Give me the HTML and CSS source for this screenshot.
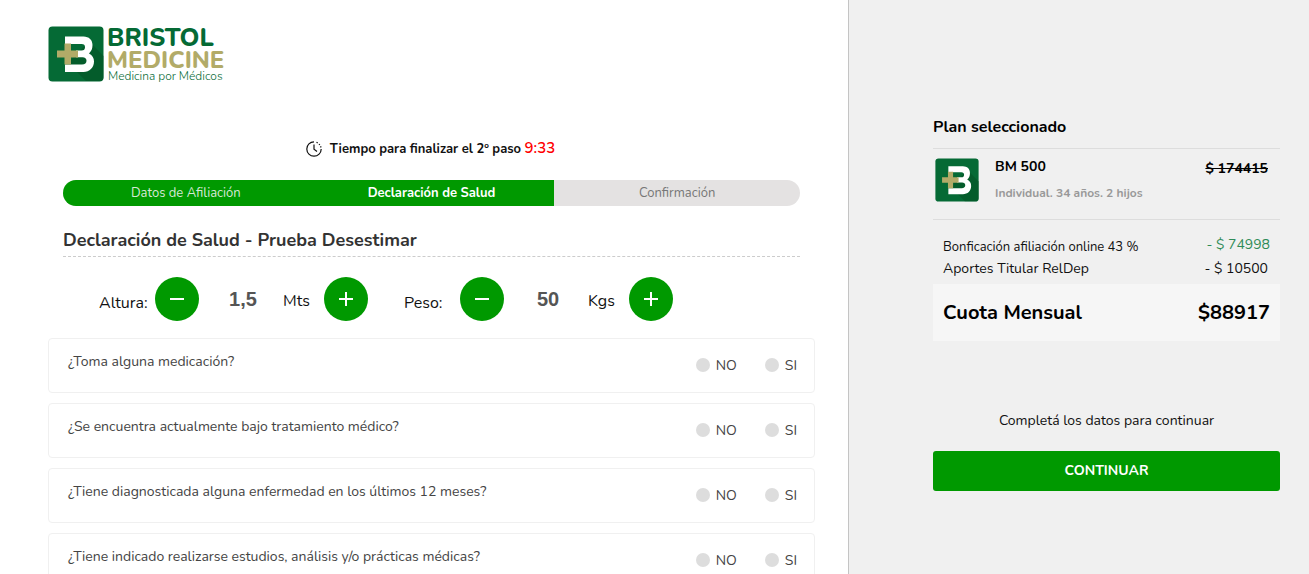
FILE: index.html
```html
<!DOCTYPE html>
<html lang="es">
<head>
<meta charset="utf-8">
<title>Bristol Medicine - Declaración de Salud</title>
<meta name="viewport" content="width=device-width, initial-scale=1">
<link rel="stylesheet" href="styles.css">
</head>
<body>
<svg class="defs" aria-hidden="true">
  <symbol id="mark" viewBox="0 0 56 56">
    <rect x=".5" y=".5" width="55" height="55" rx="4" fill="#056a35"/>
    <path d="M20 37 38 55H51.500Q55.500 55 55.500 51V30L41 15Z" fill="#045527" opacity=".65"/>
    <path d="M17 10.500H35.500C41 10.500 44.500 14 44.500 19C44.500 22.500 43.500 25 41 27.500C44.500 29.500 46 32 46 35.500C46 41.500 41.500 46 35.500 46H17V38.500H34C37 38.500 38.500 37 38.500 34.800C38.500 32.500 37 31.300 34.500 31.300H28V24.500H33.500C36 24.500 37 23.200 37 21.200C37 19.200 36 18 33.500 18H17Z" fill="#fff"/>
    <path d="M16.500 17.500H23V24.500H30V31.500H23V38.500H16.500V31.500H9V24.500H16.500Z" fill="#b2ab68"/>
  </symbol>
</svg>
<div class="layout">
  <main class="main">
    <header class="brand">
      <svg class="brand-logo" viewBox="0 -10 184 68" role="img" aria-label="Bristol Medicine">
        <use href="#mark" width="56" height="56"/>
        <text class="logo-name" x="59" y="20">BRISTOL</text>
        <text class="logo-name logo-medicine" x="59" y="42">MEDICINE</text>
        <text class="logo-tagline" x="60" y="54">Medicina por Médicos</text>
      </svg>
    </header>

    <p class="timer">
      <svg class="timer-icon" viewBox="0 0 16 16" aria-hidden="true">
        <path d="M8 .8A7.200 7.200 0 1 0 15.200 8M8 3.500V8.300L11 10.500M10.500 1.300l1.200.6M13 3l.8 1M14.600 5.300l.4 1.200" fill="none" stroke="#111" stroke-width="1.200"/>
      </svg>
      <span>Tiempo para finalizar el 2º paso <span class="countdown">9:33</span></span>
    </p>

    <ol class="steps">
      <li class="step step-done">Datos de Afiliación</li>
      <li class="step step-current" aria-current="step">Declaración de Salud</li>
      <li class="step">Confirmación</li>
    </ol>

    <h1 class="title">Declaración de Salud - Prueba Desestimar</h1>

    <form id="health">
      <div class="measures">
        <div class="measure">
          <label class="measure-label" for="altura">Altura:</label>
          <button class="round" type="button" aria-label="Reducir altura"><svg viewBox="0 0 16 16"><path d="M1 8H15"/></svg></button>
          <input class="measure-value" id="altura" type="text" value="1,5">
          <span class="unit">Mts</span>
          <button class="round" type="button" aria-label="Aumentar altura"><svg viewBox="0 0 16 16"><path d="M1 8H15M8 1V15"/></svg></button>
        </div>
        <div class="measure">
          <label class="measure-label" for="peso">Peso:</label>
          <button class="round" type="button" aria-label="Reducir peso"><svg viewBox="0 0 16 16"><path d="M1 8H15"/></svg></button>
          <input class="measure-value" id="peso" type="text" value="50">
          <span class="unit">Kgs</span>
          <button class="round" type="button" aria-label="Aumentar peso"><svg viewBox="0 0 16 16"><path d="M1 8H15M8 1V15"/></svg></button>
        </div>
      </div>

      <div class="questions">
        <div class="question" role="radiogroup" aria-labelledby="q1">
          <p class="question-text" id="q1">¿Toma alguna medicación?</p>
          <div class="answers">
            <label class="answer"><input type="radio" name="q1" value="no">NO</label>
            <label class="answer"><input type="radio" name="q1" value="si">SI</label>
          </div>
        </div>
        <div class="question" role="radiogroup" aria-labelledby="q2">
          <p class="question-text" id="q2">¿Se encuentra actualmente bajo tratamiento médico?</p>
          <div class="answers">
            <label class="answer"><input type="radio" name="q2" value="no">NO</label>
            <label class="answer"><input type="radio" name="q2" value="si">SI</label>
          </div>
        </div>
        <div class="question" role="radiogroup" aria-labelledby="q3">
          <p class="question-text" id="q3">¿Tiene diagnosticada alguna enfermedad en los últimos 12 meses?</p>
          <div class="answers">
            <label class="answer"><input type="radio" name="q3" value="no">NO</label>
            <label class="answer"><input type="radio" name="q3" value="si">SI</label>
          </div>
        </div>
        <div class="question" role="radiogroup" aria-labelledby="q4">
          <p class="question-text" id="q4">¿Tiene indicado realizarse estudios, análisis y/o prácticas médicas?</p>
          <div class="answers">
            <label class="answer"><input type="radio" name="q4" value="no">NO</label>
            <label class="answer"><input type="radio" name="q4" value="si">SI</label>
          </div>
        </div>
      </div>
    </form>
  </main>

  <aside class="summary">
    <h2 class="summary-title">Plan seleccionado</h2>
    <div class="plan">
      <svg class="plan-logo" aria-hidden="true"><use href="#mark"/></svg>
      <div class="plan-info">
        <p class="plan-name">BM 500</p>
        <p class="plan-detail">Individual. 34 años. 2 hijos</p>
      </div>
      <s class="plan-price">$ 174415</s>
    </div>
    <dl class="charges">
      <div class="charge charge-discount"><dt>Bonficación afiliación online 43 %</dt><dd>- $ 74998</dd></div>
      <div class="charge"><dt>Aportes Titular RelDep</dt><dd>- $ 10500</dd></div>
      <div class="total"><dt>Cuota Mensual</dt><dd>$88917</dd></div>
    </dl>
    <p class="hint">Completá los datos para continuar</p>
    <button class="continue" type="submit" form="health">CONTINUAR</button>
  </aside>
</div>
</body>
</html>
```
FILE: styles.css
```css
* { box-sizing: border-box; }

body {
  margin: 0;
  background: #fff;
  color: #111;
  font-family: Nunito, Lato, "Noto Sans", sans-serif;
  font-size: 14px;
  line-height: 20px;
}

h1, h2, p, ol, dl, dd { margin: 0; padding: 0; }
button, input { font: inherit; }
.defs { display: none; }

.layout {
  display: grid;
  grid-template-columns: 849fr 460fr;
  height: 100vh;
}

.main {
  overflow: hidden;
  padding: 16px 33px 0 48px;
  border-right: 1px solid #c4c4c4;
}

.brand-logo { display: block; width: 184px; height: 68px; overflow: visible; }
.logo-name { font-size: 25px; font-weight: 800; fill: #056a35; }
.logo-medicine { font-size: 24px; fill: #b2ab68; }
.logo-tagline { font-size: 12px; font-weight: 300; fill: #056a35; }

.timer {
  display: flex;
  align-items: center;
  justify-content: center;
  gap: 8px;
  margin-top: 54px;
  padding-right: 2px;
  font-size: 13px;
  font-weight: 700;
}
.timer-icon { width: 16px; height: 16px; }
.countdown { color: #f00; font-size: 15px; font-weight: 600; }

.steps {
  display: grid;
  grid-template-columns: repeat(3, 1fr);
  margin: 21px 15px 0;
  border-radius: 13px;
  overflow: hidden;
  list-style: none;
  background: #e4e2e2;
  color: #777;
  font-size: 13px;
  line-height: 26px;
  text-align: center;
}
.step-done { background: #090; color: #d5e8d5; }
.step-current { background: #090; color: #fff; font-weight: 700; }

.title {
  margin: 22px 15px 0;
  padding-bottom: 4px;
  border-bottom: 1px dashed #ccc;
  color: #333;
  font-size: 18px;
  font-weight: 700;
  line-height: 24px;
}

.measures {
  display: flex;
  gap: 36px;
  margin: 20px 0 17px 51px;
}
.measure { display: flex; align-items: center; font-size: 16px; }
.measure-label { width: 56px; padding-top: 8px; }
.measure-value {
  width: 80px;
  margin-left: 4px;
  padding: 0;
  border: 0;
  background: transparent;
  color: #555;
  font: bold 20px "Liberation Sans", Arial, sans-serif;
  text-align: center;
}
.unit { width: 41px; padding-top: 4px; }
.round {
  display: grid;
  place-items: center;
  width: 44px;
  height: 44px;
  padding: 0;
  border: 0;
  border-radius: 50%;
  background: #090;
}
.round svg { width: 16px; height: 16px; fill: none; stroke: #fff; stroke-width: 2; }

.questions { display: grid; gap: 10px; }
.question {
  display: flex;
  align-items: flex-start;
  justify-content: space-between;
  min-height: 55px;
  padding: 12px 17px 12px 19px;
  border: 1px solid #f0f0f0;
  border-radius: 4px;
  color: #444;
}
.question-text { line-height: 22px; }
.answers { display: flex; gap: 28px; padding-top: 4px; }
.answer { display: flex; align-items: center; gap: 6px; line-height: 22px; }
.answer input {
  appearance: none;
  width: 14px;
  height: 14px;
  margin: 0 0 2px;
  border-radius: 50%;
  background: #ddd;
}
.answer input:checked { background: #090; }

.summary { padding: 116px 29px 0 84px; background: #f0f0f0; }
.summary-title {
  padding-bottom: 10px;
  border-bottom: 1px solid #ddd;
  color: #000;
  font-size: 16px;
  font-weight: 700;
  line-height: 22px;
}
.plan {
  display: flex;
  align-items: flex-start;
  height: 71px;
  padding: 8px 12px 0 2px;
  border-bottom: 1px solid #ddd;
  color: #000;
}
.plan-logo { width: 44px; height: 44px; margin: 1px 16px 0 0; }
.plan-info { flex: 1; }
.plan-name { font-weight: 700; }
.plan-detail { margin-top: 6px; color: #999; font-size: 12px; font-weight: 700; }
.plan-price { padding-top: 2px; font-weight: 700; }

.charges { padding-top: 14px; }
.charge {
  display: flex;
  justify-content: space-between;
  padding: 0 12px 0 10px;
  line-height: 24px;
}
.charge-discount { padding-right: 10px; line-height: 22px; }
.charge-discount dt { padding-top: 3px; font-size: 13px; line-height: 20px; }
.charge-discount dd { color: #2e8b57; }
.total {
  display: flex;
  justify-content: space-between;
  margin-top: 3px;
  padding: 14px 10px;
  background: #f6f6f6;
  color: #000;
  font-size: 20px;
  font-weight: 700;
  line-height: 29px;
}
.hint { margin-top: 70px; text-align: center; }
.continue {
  width: 100%;
  height: 40px;
  margin-top: 20px;
  border: 0;
  border-radius: 3px;
  background: #090;
  color: #fff;
  font-size: 14px;
  font-weight: 700;
}
```
